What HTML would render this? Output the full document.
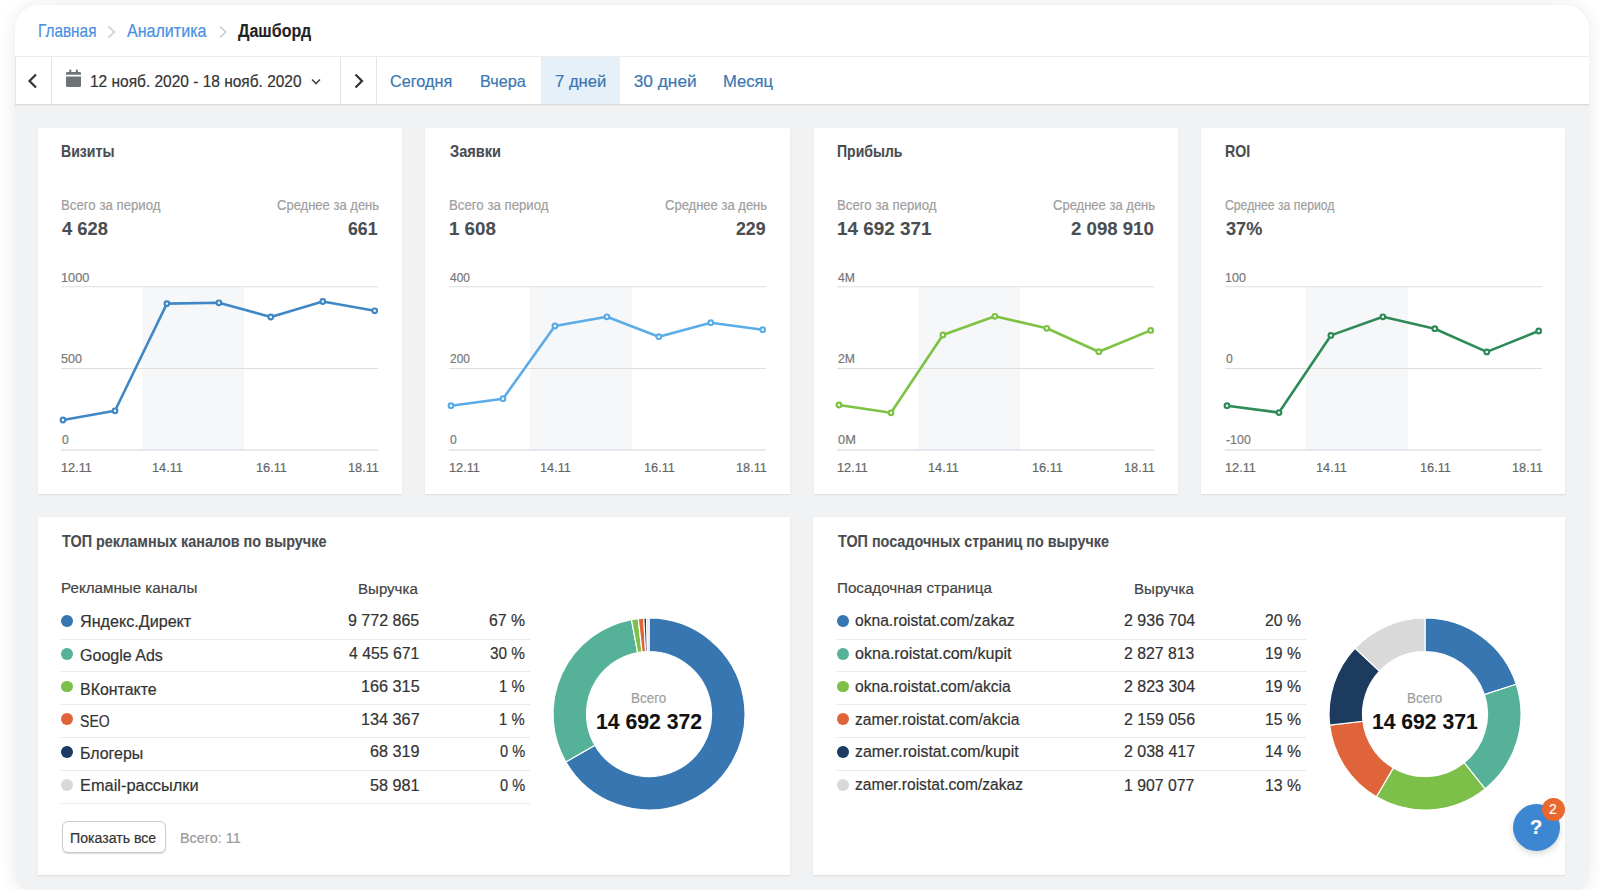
<!DOCTYPE html><html><head><meta charset="utf-8"><style>
*{margin:0;padding:0;box-sizing:border-box}
html,body{width:1600px;height:890px;overflow:hidden;background:#fff;font-family:"Liberation Sans",sans-serif}
.a{position:absolute}
.t{position:absolute;white-space:nowrap;line-height:1;transform-origin:0 0;-webkit-text-stroke:0.2px currentColor}
.t.b{-webkit-text-stroke:0.1px currentColor}
.card{position:absolute;background:#fff;box-shadow:0 1px 0 #dfe0e2,0 1px 3px rgba(0,0,0,0.05)}
.vsep{position:absolute;top:57px;height:47px;width:1px;background:#e4e4e4}
.div{position:absolute;height:1px;background:#e9e9e9}
.dot{position:absolute;width:11.5px;height:11.5px;border-radius:50%}
</style></head><body>
<div class="a" style="left:15px;top:5px;width:1574px;height:890px;border-radius:24px;background:#f0f2f4;box-shadow:0 0 18px rgba(0,0,0,0.09);overflow:hidden">
  <div class="a" style="left:0;top:0;width:1574px;height:51px;background:#fff"></div>
  <div class="a" style="left:0;top:51px;width:1574px;height:1px;background:#ececec"></div>
  <div class="a" style="left:0;top:52px;width:1574px;height:47px;background:#fff"></div>
  <div class="a" style="left:0;top:99px;width:1574px;height:1px;background:#dcdcdc"></div>
  <div class="a" style="left:0;top:100px;width:1574px;height:2px;background:linear-gradient(#e7e9eb,#f0f2f4)"></div>
</div>
<div class="vsep" style="left:15px"></div>
<div class="vsep" style="left:50.5px"></div>
<div class="vsep" style="left:340px"></div>
<div class="vsep" style="left:376px"></div>
<div class="a" style="left:541px;top:57px;width:79px;height:47px;background:#e6f0f9"></div>

<svg class="a" style="left:0;top:0" width="400" height="110">
<polyline points="108.5,26.5 114.3,32 108.5,37.5" fill="none" stroke="#c6c6c6" stroke-width="1.4"/>
<polyline points="220,26.5 225.8,32 220,37.5" fill="none" stroke="#c6c6c6" stroke-width="1.4"/>
<polyline points="36,74.5 29.5,81 36,87.5" fill="none" stroke="#333" stroke-width="2.2"/>
<polyline points="355.5,74.5 362,81 355.5,87.5" fill="none" stroke="#333" stroke-width="2.2"/>
<polyline points="312,79.5 316,83.5 320,79.5" fill="none" stroke="#444" stroke-width="1.6"/>
<path d="M66,76.5 H81 V85.5 Q81,87 79.5,87 H67.5 Q66,87 66,85.5 Z" fill="#6f7375"/>
<path d="M66,74.7 V73.4 Q66,72.1 67.3,72.1 H79.7 Q81,72.1 81,73.4 V74.7 Z" fill="#6f7375"/>
<rect x="69.3" y="69.4" width="2" height="3" rx="0.8" fill="#6f7375"/><rect x="75.9" y="69.4" width="2" height="3" rx="0.8" fill="#6f7375"/>
</svg>
<div class="card" style="left:38px;top:127.5px;width:363.6px;height:366.5px"></div>
<div class="card" style="left:425px;top:127.5px;width:365.0px;height:366.5px"></div>
<div class="card" style="left:813.5px;top:127.5px;width:364.5px;height:366.5px"></div>
<div class="card" style="left:1201px;top:127.5px;width:364.0px;height:366.5px"></div>
<div class="card" style="left:38px;top:517px;width:752px;height:358px"></div>
<div class="card" style="left:813.3px;top:517px;width:751.7px;height:358px"></div>
<svg class="a" style="left:38px;top:270px" width="364" height="200"><rect x="104" y="17" width="102" height="163" fill="#f5f7f9"/><rect x="23" y="16.25" width="317" height="1" fill="#dedede"/><rect x="23" y="98.0" width="317" height="1" fill="#dedede"/><rect x="23" y="179.5" width="317" height="1" fill="#ccd6e0"/><polyline points="25.0,150.0 77.0,140.8 128.9,33.6 180.9,32.8 232.8,47.0 284.8,31.5 336.7,40.8" fill="none" stroke="#3f88c5" stroke-width="2.6" stroke-linejoin="round"/><circle cx="25.0" cy="150.0" r="2.3" fill="#fff" stroke="#3f88c5" stroke-width="2.2"/><circle cx="77.0" cy="140.8" r="2.3" fill="#fff" stroke="#3f88c5" stroke-width="2.2"/><circle cx="128.9" cy="33.6" r="2.3" fill="#fff" stroke="#3f88c5" stroke-width="2.2"/><circle cx="180.9" cy="32.8" r="2.3" fill="#fff" stroke="#3f88c5" stroke-width="2.2"/><circle cx="232.8" cy="47.0" r="2.3" fill="#fff" stroke="#3f88c5" stroke-width="2.2"/><circle cx="284.8" cy="31.5" r="2.3" fill="#fff" stroke="#3f88c5" stroke-width="2.2"/><circle cx="336.7" cy="40.8" r="2.3" fill="#fff" stroke="#3f88c5" stroke-width="2.2"/></svg>
<svg class="a" style="left:426px;top:270px" width="364" height="200"><rect x="104" y="17" width="102" height="163" fill="#f5f7f9"/><rect x="23" y="16.25" width="317" height="1" fill="#dedede"/><rect x="23" y="98.0" width="317" height="1" fill="#dedede"/><rect x="23" y="179.5" width="317" height="1" fill="#ccd6e0"/><polyline points="25.0,135.7 77.0,128.7 128.9,56.0 180.9,46.8 232.8,66.7 284.8,52.7 336.7,59.7" fill="none" stroke="#5aade6" stroke-width="2.6" stroke-linejoin="round"/><circle cx="25.0" cy="135.7" r="2.3" fill="#fff" stroke="#5aade6" stroke-width="2.2"/><circle cx="77.0" cy="128.7" r="2.3" fill="#fff" stroke="#5aade6" stroke-width="2.2"/><circle cx="128.9" cy="56.0" r="2.3" fill="#fff" stroke="#5aade6" stroke-width="2.2"/><circle cx="180.9" cy="46.8" r="2.3" fill="#fff" stroke="#5aade6" stroke-width="2.2"/><circle cx="232.8" cy="66.7" r="2.3" fill="#fff" stroke="#5aade6" stroke-width="2.2"/><circle cx="284.8" cy="52.7" r="2.3" fill="#fff" stroke="#5aade6" stroke-width="2.2"/><circle cx="336.7" cy="59.7" r="2.3" fill="#fff" stroke="#5aade6" stroke-width="2.2"/></svg>
<svg class="a" style="left:814px;top:270px" width="364" height="200"><rect x="104" y="17" width="102" height="163" fill="#f5f7f9"/><rect x="23" y="16.25" width="317" height="1" fill="#dedede"/><rect x="23" y="98.0" width="317" height="1" fill="#dedede"/><rect x="23" y="179.5" width="317" height="1" fill="#ccd6e0"/><polyline points="25.0,135.0 77.0,142.8 128.9,65.0 180.9,46.3 232.8,58.3 284.8,81.7 336.7,60.4" fill="none" stroke="#7dc242" stroke-width="2.6" stroke-linejoin="round"/><circle cx="25.0" cy="135.0" r="2.3" fill="#fff" stroke="#7dc242" stroke-width="2.2"/><circle cx="77.0" cy="142.8" r="2.3" fill="#fff" stroke="#7dc242" stroke-width="2.2"/><circle cx="128.9" cy="65.0" r="2.3" fill="#fff" stroke="#7dc242" stroke-width="2.2"/><circle cx="180.9" cy="46.3" r="2.3" fill="#fff" stroke="#7dc242" stroke-width="2.2"/><circle cx="232.8" cy="58.3" r="2.3" fill="#fff" stroke="#7dc242" stroke-width="2.2"/><circle cx="284.8" cy="81.7" r="2.3" fill="#fff" stroke="#7dc242" stroke-width="2.2"/><circle cx="336.7" cy="60.4" r="2.3" fill="#fff" stroke="#7dc242" stroke-width="2.2"/></svg>
<svg class="a" style="left:1202px;top:270px" width="364" height="200"><rect x="104" y="17" width="102" height="163" fill="#f5f7f9"/><rect x="23" y="16.25" width="317" height="1" fill="#dedede"/><rect x="23" y="98.0" width="317" height="1" fill="#dedede"/><rect x="23" y="179.5" width="317" height="1" fill="#ccd6e0"/><polyline points="25.0,135.7 77.0,142.6 128.9,65.4 180.9,46.8 232.8,58.7 284.8,81.9 336.7,61.0" fill="none" stroke="#2e8b57" stroke-width="2.6" stroke-linejoin="round"/><circle cx="25.0" cy="135.7" r="2.3" fill="#fff" stroke="#2e8b57" stroke-width="2.2"/><circle cx="77.0" cy="142.6" r="2.3" fill="#fff" stroke="#2e8b57" stroke-width="2.2"/><circle cx="128.9" cy="65.4" r="2.3" fill="#fff" stroke="#2e8b57" stroke-width="2.2"/><circle cx="180.9" cy="46.8" r="2.3" fill="#fff" stroke="#2e8b57" stroke-width="2.2"/><circle cx="232.8" cy="58.7" r="2.3" fill="#fff" stroke="#2e8b57" stroke-width="2.2"/><circle cx="284.8" cy="81.9" r="2.3" fill="#fff" stroke="#2e8b57" stroke-width="2.2"/><circle cx="336.7" cy="61.0" r="2.3" fill="#fff" stroke="#2e8b57" stroke-width="2.2"/></svg>
<div class="dot" style="left:60.9px;top:615.40px;width:11.8px;height:11.8px;background:#3776b0"></div>
<div class="div" style="left:61px;top:638.80px;width:469px"></div>
<div class="dot" style="left:60.9px;top:647.90px;width:11.8px;height:11.8px;background:#55b197"></div>
<div class="div" style="left:61px;top:671.40px;width:469px"></div>
<div class="dot" style="left:60.9px;top:680.50px;width:11.8px;height:11.8px;background:#7cc04a"></div>
<div class="div" style="left:61px;top:703.75px;width:469px"></div>
<div class="dot" style="left:60.9px;top:713.30px;width:11.8px;height:11.8px;background:#e0643a"></div>
<div class="div" style="left:61px;top:736.70px;width:469px"></div>
<div class="dot" style="left:60.9px;top:746.30px;width:11.8px;height:11.8px;background:#1c3b5e"></div>
<div class="div" style="left:61px;top:769.80px;width:469px"></div>
<div class="dot" style="left:60.9px;top:779.10px;width:11.8px;height:11.8px;background:#d9d9d9"></div>
<div class="div" style="left:61px;top:802.80px;width:469px"></div>
<div class="dot" style="left:836.9px;top:615.40px;width:11.8px;height:11.8px;background:#3776b0"></div>
<div class="div" style="left:837px;top:638.80px;width:469px"></div>
<div class="dot" style="left:836.9px;top:647.90px;width:11.8px;height:11.8px;background:#55b197"></div>
<div class="div" style="left:837px;top:671.40px;width:469px"></div>
<div class="dot" style="left:836.9px;top:680.50px;width:11.8px;height:11.8px;background:#7cc04a"></div>
<div class="div" style="left:837px;top:703.75px;width:469px"></div>
<div class="dot" style="left:836.9px;top:713.30px;width:11.8px;height:11.8px;background:#e0643a"></div>
<div class="div" style="left:837px;top:736.70px;width:469px"></div>
<div class="dot" style="left:836.9px;top:746.30px;width:11.8px;height:11.8px;background:#1c3b5e"></div>
<div class="div" style="left:837px;top:769.80px;width:469px"></div>
<div class="dot" style="left:836.9px;top:779.10px;width:11.8px;height:11.8px;background:#d9d9d9"></div>
<svg class="a" style="left:548.5px;top:614.2px" width="200" height="200"><path d="M100.00,4.00 A96,96 0 1 1 16.82,147.93 L45.85,131.21 A62.5,62.5 0 1 0 100.00,37.50 Z" fill="#3776b0" stroke="#fff" stroke-width="1.2"/><path d="M16.82,147.93 A96,96 0 0 1 82.49,5.61 L88.60,38.55 A62.5,62.5 0 0 0 45.85,131.21 Z" fill="#55b197" stroke="#fff" stroke-width="1.2"/><path d="M82.49,5.61 A96,96 0 0 1 89.25,4.60 L93.00,37.89 A62.5,62.5 0 0 0 88.60,38.55 Z" fill="#7cc04a" stroke="#fff" stroke-width="1.2"/><path d="M89.25,4.60 A96,96 0 0 1 94.76,4.14 L96.59,37.59 A62.5,62.5 0 0 0 93.00,37.89 Z" fill="#e0643a" stroke="#fff" stroke-width="1.2"/><path d="M94.76,4.14 A96,96 0 0 1 97.57,4.03 L98.42,37.52 A62.5,62.5 0 0 0 96.59,37.59 Z" fill="#1c3b5e" stroke="#fff" stroke-width="1.2"/><path d="M97.57,4.03 A96,96 0 0 1 100.00,4.00 L100.00,37.50 A62.5,62.5 0 0 0 98.42,37.52 Z" fill="#d9d9d9" stroke="#fff" stroke-width="1.2"/></svg>
<svg class="a" style="left:1324.5px;top:614.2px" width="200" height="200"><path d="M100.00,4.00 A96,96 0 0 1 191.28,70.27 L159.43,80.64 A62.5,62.5 0 0 0 100.00,37.50 Z" fill="#3776b0" stroke="#fff" stroke-width="1.2"/><path d="M191.28,70.27 A96,96 0 0 1 160.09,174.86 L139.12,148.74 A62.5,62.5 0 0 0 159.43,80.64 Z" fill="#55b197" stroke="#fff" stroke-width="1.2"/><path d="M160.09,174.86 A96,96 0 0 1 51.39,182.78 L68.35,153.89 A62.5,62.5 0 0 0 139.12,148.74 Z" fill="#7cc04a" stroke="#fff" stroke-width="1.2"/><path d="M51.39,182.78 A96,96 0 0 1 4.65,111.16 L37.92,107.26 A62.5,62.5 0 0 0 68.35,153.89 Z" fill="#e0643a" stroke="#fff" stroke-width="1.2"/><path d="M4.65,111.16 A96,96 0 0 1 30.10,34.20 L54.49,57.16 A62.5,62.5 0 0 0 37.92,107.26 Z" fill="#1c3b5e" stroke="#fff" stroke-width="1.2"/><path d="M30.10,34.20 A96,96 0 0 1 100.00,4.00 L100.00,37.50 A62.5,62.5 0 0 0 54.49,57.16 Z" fill="#d9d9d9" stroke="#fff" stroke-width="1.2"/></svg>
<div class="a" style="left:61.5px;top:820.5px;width:104.5px;height:32px;border:1px solid #cbcbcb;border-radius:6px;background:#fff;box-shadow:0 1px 1px rgba(0,0,0,0.15)"></div>
<div class="a" style="left:1512.5px;top:803.5px;width:47px;height:47px;border-radius:50%;background:#3d86d1;box-shadow:0 3px 6px rgba(0,0,0,0.15)"></div>
<div class="a" style="left:1542px;top:798px;width:23px;height:23px;border-radius:50%;background:#e8682f"></div>
<div class="t" style="left:37.88px;top:23.00px;font-size:17.60px;color:#4a90e2;transform:scaleX(0.8731)">Главная</div>
<div class="t" style="left:127.10px;top:23.00px;font-size:17.60px;color:#4a90e2;transform:scaleX(0.9126)">Аналитика</div>
<div class="t b" style="left:238.00px;top:23.00px;font-size:17.60px;color:#222;font-weight:700;transform:scaleX(0.9125)">Дашборд</div>
<div class="t" style="left:90.11px;top:73.00px;font-size:17.32px;color:#333;transform:scaleX(0.8936)">12 нояб. 2020 - 18 нояб. 2020</div>
<div class="t" style="left:390.06px;top:73.00px;font-size:17.32px;color:#3a77b2;transform:scaleX(0.9385)">Сегодня</div>
<div class="t" style="left:480.06px;top:73.00px;font-size:17.32px;color:#3a77b2;transform:scaleX(0.9375)">Вчера</div>
<div class="t" style="left:554.64px;top:73.00px;font-size:17.32px;color:#3a77b2;transform:scaleX(0.9615)">7 дней</div>
<div class="t" style="left:633.70px;top:73.00px;font-size:17.32px;color:#3a77b2;transform:scaleX(1.0000)">30 дней</div>
<div class="t" style="left:723.04px;top:73.00px;font-size:17.32px;color:#3a77b2;transform:scaleX(0.9608)">Месяц</div>
<div class="t b" style="left:60.72px;top:143.00px;font-size:16.06px;color:#4a4d50;font-weight:700;transform:scaleX(0.8780)">Визиты</div>
<div class="t" style="left:60.68px;top:198.00px;font-size:14.39px;color:#9e9e9e;transform:scaleX(0.9206)">Всего за период</div>
<div class="t b" style="left:61.60px;top:219.00px;font-size:19.13px;color:#4a4e52;font-weight:700;transform:scaleX(0.9583)">4 628</div>
<div class="t" style="left:276.59px;top:198.00px;font-size:14.39px;color:#9e9e9e;transform:scaleX(0.9054)">Среднее за день</div>
<div class="t b" style="left:347.70px;top:219.00px;font-size:19.13px;color:#4a4e52;font-weight:700;transform:scaleX(0.9250)">661</div>
<div class="t" style="left:60.53px;top:271.00px;font-size:13.13px;color:#777;transform:scaleX(0.9732)">1000</div>
<div class="t" style="left:60.55px;top:352.00px;font-size:13.13px;color:#777;transform:scaleX(0.9524)">500</div>
<div class="t" style="left:61.50px;top:433.00px;font-size:13.13px;color:#777;transform:scaleX(0.9286)">0</div>
<div class="t" style="left:60.91px;top:462.00px;font-size:12.85px;color:#666;transform:scaleX(0.9900)">12.11</div>
<div class="t" style="left:151.91px;top:462.00px;font-size:12.85px;color:#666;transform:scaleX(0.9900)">14.11</div>
<div class="t" style="left:255.81px;top:462.00px;font-size:12.85px;color:#666;transform:scaleX(0.9900)">16.11</div>
<div class="t" style="left:347.61px;top:462.00px;font-size:12.85px;color:#666;transform:scaleX(0.9900)">18.11</div>
<div class="t b" style="left:449.60px;top:143.00px;font-size:16.06px;color:#4a4d50;font-weight:700;transform:scaleX(0.9091)">Заявки</div>
<div class="t" style="left:448.68px;top:198.00px;font-size:14.39px;color:#9e9e9e;transform:scaleX(0.9206)">Всего за период</div>
<div class="t b" style="left:448.62px;top:219.00px;font-size:19.13px;color:#4a4e52;font-weight:700;transform:scaleX(0.9787)">1 608</div>
<div class="t" style="left:664.59px;top:198.00px;font-size:14.39px;color:#9e9e9e;transform:scaleX(0.9054)">Среднее за день</div>
<div class="t b" style="left:735.60px;top:219.00px;font-size:19.13px;color:#4a4e52;font-weight:700;transform:scaleX(0.9281)">229</div>
<div class="t" style="left:449.50px;top:271.00px;font-size:13.13px;color:#777;transform:scaleX(0.9091)">400</div>
<div class="t" style="left:449.50px;top:352.00px;font-size:13.13px;color:#777;transform:scaleX(0.9091)">200</div>
<div class="t" style="left:449.50px;top:433.00px;font-size:13.13px;color:#777;transform:scaleX(0.9286)">0</div>
<div class="t" style="left:448.91px;top:462.00px;font-size:12.85px;color:#666;transform:scaleX(0.9900)">12.11</div>
<div class="t" style="left:539.91px;top:462.00px;font-size:12.85px;color:#666;transform:scaleX(0.9900)">14.11</div>
<div class="t" style="left:643.81px;top:462.00px;font-size:12.85px;color:#666;transform:scaleX(0.9900)">16.11</div>
<div class="t" style="left:735.61px;top:462.00px;font-size:12.85px;color:#666;transform:scaleX(0.9900)">18.11</div>
<div class="t b" style="left:836.73px;top:143.00px;font-size:16.06px;color:#4a4d50;font-weight:700;transform:scaleX(0.8743)">Прибыль</div>
<div class="t" style="left:836.68px;top:198.00px;font-size:14.39px;color:#9e9e9e;transform:scaleX(0.9206)">Всего за период</div>
<div class="t b" style="left:836.61px;top:219.00px;font-size:19.13px;color:#4a4e52;font-weight:700;transform:scaleX(0.9894)">14 692 371</div>
<div class="t" style="left:1052.59px;top:198.00px;font-size:14.39px;color:#9e9e9e;transform:scaleX(0.9054)">Среднее за день</div>
<div class="t b" style="left:1070.50px;top:219.00px;font-size:19.13px;color:#4a4e52;font-weight:700;transform:scaleX(0.9741)">2 098 910</div>
<div class="t" style="left:837.50px;top:271.00px;font-size:13.13px;color:#777;transform:scaleX(0.9294)">4M</div>
<div class="t" style="left:837.50px;top:352.00px;font-size:13.13px;color:#777;transform:scaleX(0.9294)">2M</div>
<div class="t" style="left:837.50px;top:433.00px;font-size:13.13px;color:#777;transform:scaleX(0.9765)">0M</div>
<div class="t" style="left:836.91px;top:462.00px;font-size:12.85px;color:#666;transform:scaleX(0.9900)">12.11</div>
<div class="t" style="left:927.91px;top:462.00px;font-size:12.85px;color:#666;transform:scaleX(0.9900)">14.11</div>
<div class="t" style="left:1031.81px;top:462.00px;font-size:12.85px;color:#666;transform:scaleX(0.9900)">16.11</div>
<div class="t" style="left:1123.61px;top:462.00px;font-size:12.85px;color:#666;transform:scaleX(0.9900)">18.11</div>
<div class="t b" style="left:1224.71px;top:143.00px;font-size:16.06px;color:#4a4d50;font-weight:700;transform:scaleX(0.8852)">ROI</div>
<div class="t" style="left:1224.75px;top:198.00px;font-size:14.39px;color:#9e9e9e;transform:scaleX(0.8500)">Среднее за период</div>
<div class="t b" style="left:1225.60px;top:219.00px;font-size:19.13px;color:#4a4e52;font-weight:700;transform:scaleX(0.9500)">37%</div>
<div class="t" style="left:1224.55px;top:271.00px;font-size:13.13px;color:#777;transform:scaleX(0.9524)">100</div>
<div class="t" style="left:1225.50px;top:352.00px;font-size:13.13px;color:#777;transform:scaleX(0.9286)">0</div>
<div class="t" style="left:1225.50px;top:433.00px;font-size:13.13px;color:#777;transform:scaleX(0.9423)">-100</div>
<div class="t" style="left:1224.91px;top:462.00px;font-size:12.85px;color:#666;transform:scaleX(0.9900)">12.11</div>
<div class="t" style="left:1315.91px;top:462.00px;font-size:12.85px;color:#666;transform:scaleX(0.9900)">14.11</div>
<div class="t" style="left:1419.81px;top:462.00px;font-size:12.85px;color:#666;transform:scaleX(0.9900)">16.11</div>
<div class="t" style="left:1511.61px;top:462.00px;font-size:12.85px;color:#666;transform:scaleX(0.9900)">18.11</div>
<div class="t b" style="left:61.80px;top:534.00px;font-size:15.78px;color:#4a4d50;font-weight:700;transform:scaleX(0.9135)">ТОП рекламных каналов по выручке</div>
<div class="t" style="left:60.60px;top:580.00px;font-size:15.22px;color:#444;transform:scaleX(0.9970)">Рекламные каналы</div>
<div class="t" style="left:358.31px;top:581.00px;font-size:15.22px;color:#444;transform:scaleX(0.9900)">Выручка</div>
<div class="t" style="left:80.34px;top:614.00px;font-size:16.90px;color:#333;transform:scaleX(0.9552)">Яндекс.Директ</div>
<div class="t" style="left:347.55px;top:613.00px;font-size:16.90px;color:#333;transform:scaleX(0.9486)">9 772 865</div>
<div class="t" style="left:489.06px;top:613.00px;font-size:16.90px;color:#333;transform:scaleX(0.9351)">67 %</div>
<div class="t" style="left:80.35px;top:648.00px;font-size:16.90px;color:#333;transform:scaleX(0.9488)">Google Ads</div>
<div class="t" style="left:348.50px;top:646.00px;font-size:16.90px;color:#333;transform:scaleX(0.9360)">4 455 671</div>
<div class="t" style="left:490.09px;top:646.00px;font-size:16.90px;color:#333;transform:scaleX(0.9081)">30 %</div>
<div class="t" style="left:80.36px;top:682.00px;font-size:16.90px;color:#333;transform:scaleX(0.9437)">ВКонтакте</div>
<div class="t" style="left:361.04px;top:679.00px;font-size:16.90px;color:#333;transform:scaleX(0.9610)">166 315</div>
<div class="t" style="left:499.12px;top:679.00px;font-size:16.90px;color:#333;transform:scaleX(0.8786)">1 %</div>
<div class="t" style="left:80.47px;top:714.00px;font-size:16.90px;color:#333;transform:scaleX(0.8324)">SEO</div>
<div class="t" style="left:361.04px;top:712.00px;font-size:16.90px;color:#333;transform:scaleX(0.9610)">134 367</div>
<div class="t" style="left:499.12px;top:712.00px;font-size:16.90px;color:#333;transform:scaleX(0.8786)">1 %</div>
<div class="t" style="left:80.36px;top:746.00px;font-size:16.90px;color:#333;transform:scaleX(0.9431)">Блогеры</div>
<div class="t" style="left:369.74px;top:744.00px;font-size:16.90px;color:#333;transform:scaleX(0.9600)">68 319</div>
<div class="t" style="left:499.60px;top:744.00px;font-size:16.90px;color:#333;transform:scaleX(0.8621)">0 %</div>
<div class="t" style="left:80.33px;top:778.00px;font-size:16.90px;color:#333;transform:scaleX(0.9700)">Email-рассылки</div>
<div class="t" style="left:369.74px;top:778.00px;font-size:16.90px;color:#333;transform:scaleX(0.9600)">58 981</div>
<div class="t" style="left:499.60px;top:778.00px;font-size:16.90px;color:#333;transform:scaleX(0.8621)">0 %</div>
<div class="t" style="left:630.86px;top:691.00px;font-size:14.25px;color:#9e9e9e;transform:scaleX(0.9444)">Всего</div>
<div class="t b" style="left:595.55px;top:711.00px;font-size:21.23px;color:#111;font-weight:700;transform:scaleX(0.9990)">14 692 372</div>
<div class="t b" style="left:837.80px;top:534.00px;font-size:15.78px;color:#4a4d50;font-weight:700;transform:scaleX(0.9114)">ТОП посадочных страниц по выручке</div>
<div class="t" style="left:836.60px;top:580.00px;font-size:15.22px;color:#444;transform:scaleX(0.9968)">Посадочная страница</div>
<div class="t" style="left:1134.31px;top:581.00px;font-size:15.22px;color:#444;transform:scaleX(0.9900)">Выручка</div>
<div class="t" style="left:854.70px;top:613.00px;font-size:16.90px;color:#333;transform:scaleX(0.9244)">okna.roistat.com/zakaz</div>
<div class="t" style="left:1123.65px;top:613.00px;font-size:16.90px;color:#333;transform:scaleX(0.9473)">2 936 704</div>
<div class="t" style="left:1265.06px;top:613.00px;font-size:16.90px;color:#333;transform:scaleX(0.9351)">20 %</div>
<div class="t" style="left:854.70px;top:646.00px;font-size:16.90px;color:#333;transform:scaleX(0.9524)">okna.roistat.com/kupit</div>
<div class="t" style="left:1124.46px;top:646.00px;font-size:16.90px;color:#333;transform:scaleX(0.9365)">2 827 813</div>
<div class="t" style="left:1265.06px;top:646.00px;font-size:16.90px;color:#333;transform:scaleX(0.9351)">19 %</div>
<div class="t" style="left:854.70px;top:679.00px;font-size:16.90px;color:#333;transform:scaleX(0.9268)">okna.roistat.com/akcia</div>
<div class="t" style="left:1123.75px;top:679.00px;font-size:16.90px;color:#333;transform:scaleX(0.9459)">2 823 304</div>
<div class="t" style="left:1265.06px;top:679.00px;font-size:16.90px;color:#333;transform:scaleX(0.9351)">19 %</div>
<div class="t" style="left:854.70px;top:712.00px;font-size:16.90px;color:#333;transform:scaleX(0.9266)">zamer.roistat.com/akcia</div>
<div class="t" style="left:1123.75px;top:712.00px;font-size:16.90px;color:#333;transform:scaleX(0.9459)">2 159 056</div>
<div class="t" style="left:1265.06px;top:712.00px;font-size:16.90px;color:#333;transform:scaleX(0.9351)">15 %</div>
<div class="t" style="left:854.70px;top:744.00px;font-size:16.90px;color:#333;transform:scaleX(0.9425)">zamer.roistat.com/kupit</div>
<div class="t" style="left:1123.75px;top:744.00px;font-size:16.90px;color:#333;transform:scaleX(0.9459)">2 038 417</div>
<div class="t" style="left:1265.06px;top:744.00px;font-size:16.90px;color:#333;transform:scaleX(0.9351)">14 %</div>
<div class="t" style="left:854.70px;top:777.00px;font-size:16.90px;color:#333;transform:scaleX(0.9227)">zamer.roistat.com/zakaz</div>
<div class="t" style="left:1124.46px;top:778.00px;font-size:16.90px;color:#333;transform:scaleX(0.9365)">1 907 077</div>
<div class="t" style="left:1265.06px;top:778.00px;font-size:16.90px;color:#333;transform:scaleX(0.9351)">13 %</div>
<div class="t" style="left:1406.86px;top:691.00px;font-size:14.25px;color:#9e9e9e;transform:scaleX(0.9444)">Всего</div>
<div class="t b" style="left:1371.75px;top:711.00px;font-size:21.23px;color:#111;font-weight:700;transform:scaleX(0.9952)">14 692 371</div>
<div class="t" style="left:70.08px;top:830.00px;font-size:15.36px;color:#333;transform:scaleX(0.9196)">Показать все</div>
<div class="t" style="left:179.66px;top:830.00px;font-size:15.36px;color:#999;transform:scaleX(0.9365)">Всего: 11</div>
<div class="t" style="left:1530px;top:817px;font-size:20px;font-weight:700;color:#fff">?</div>
<div class="t" style="left:1549px;top:802px;font-size:14px;color:#fff">2</div>
</body></html>
